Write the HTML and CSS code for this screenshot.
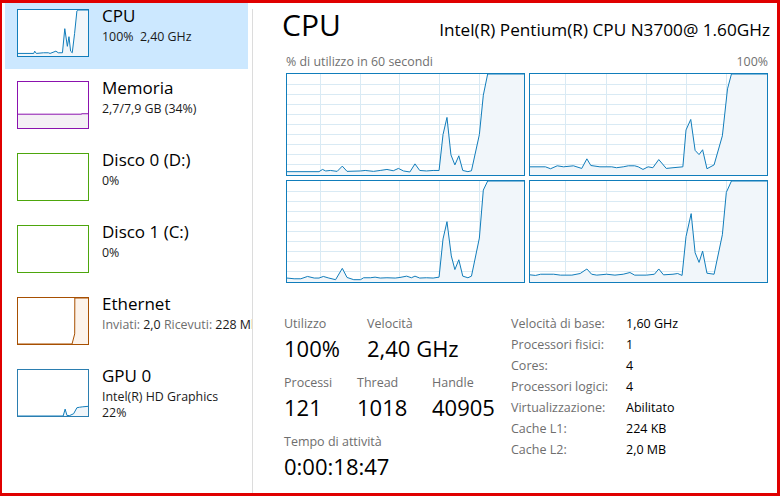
FILE: index.html
```html
<!DOCTYPE html>
<html lang="it">
<head>
<meta charset="utf-8">
<title>Gestione attività - Prestazioni</title>
<link rel="stylesheet" href="styles.css">
</head>
<body>
<div class="frame">
  <aside class="sidebar">
    <div class="item selected">
      <div class="thumb cpu">
        <svg viewBox="0 0 60 100" preserveAspectRatio="none">
          <polygon class="fill" points="0,94.4 13.5,94.4 14.3,89.5 15.7,94.4 21.9,93 26,93 27.5,94.4 32.5,89.5 34.5,93 38.1,93 40.1,40.6 42.3,79 43.7,58 45.1,89.5 46.5,93 48.5,51 50.5,2 51.3,0 60,0 60,100 0,100"/>
          <polyline class="line" points="0,94.4 13.5,94.4 14.3,89.5 15.7,94.4 21.9,93 26,93 27.5,94.4 32.5,89.5 34.5,93 38.1,93 40.1,40.6 42.3,79 43.7,58 45.1,89.5 46.5,93 48.5,51 50.5,2 51.3,0 60,0"/>
        </svg>
      </div>
      <div class="info">
        <div class="name">CPU</div>
        <div class="sub">100%&nbsp; 2,40 GHz</div>
      </div>
    </div>
    <div class="item">
      <div class="thumb mem">
        <svg viewBox="0 0 60 100" preserveAspectRatio="none">
          <polygon class="fill" points="0,70 54.5,70 54.5,69 60,69 60,100 0,100"/>
          <polyline class="line" points="0,70 54.5,70 54.5,69 60,69"/>
        </svg>
      </div>
      <div class="info">
        <div class="name">Memoria</div>
        <div class="sub">2,7/7,9 GB (34%)</div>
      </div>
    </div>
    <div class="item">
      <div class="thumb disk"></div>
      <div class="info">
        <div class="name">Disco 0 (D:)</div>
        <div class="sub">0%</div>
      </div>
    </div>
    <div class="item">
      <div class="thumb disk"></div>
      <div class="info">
        <div class="name">Disco 1 (C:)</div>
        <div class="sub">0%</div>
      </div>
    </div>
    <div class="item">
      <div class="thumb eth">
        <svg viewBox="0 0 60 100" preserveAspectRatio="none">
          <polygon class="fill" points="0,100 46.3,100 48.6,78 48.7,0 60,0 60,100"/>
          <polyline class="line" points="0,100 46.3,100 48.6,78 48.7,0 60,0"/>
        </svg>
      </div>
      <div class="info">
        <div class="name">Ethernet</div>
        <div class="sub"><span class="muted">Inviati:</span> 2,0 <span class="muted">Ricevuti:</span> 228 Mbps</div>
      </div>
    </div>
    <div class="item">
      <div class="thumb gpu">
        <svg viewBox="0 0 60 100" preserveAspectRatio="none">
          <polygon class="fill" points="0,100 38.7,100 40.4,85 42,99 44.3,99 47.7,95 50.5,82 52.7,81 55.5,80 60,79 60,100"/>
          <polyline class="line" points="0,100 38.7,100 40.4,85 42,99 44.3,99 47.7,95 50.5,82 52.7,81 55.5,80 60,79"/>
        </svg>
      </div>
      <div class="info">
        <div class="name">GPU 0</div>
        <div class="sub">Intel(R) HD Graphics</div>
        <div class="sub tight">22%</div>
      </div>
    </div>
  </aside>

  <main class="detail">
    <header class="head">
      <h1 class="title">CPU</h1>
      <div class="model">Intel(R) Pentium(R) CPU N3700@ 1.60GHz</div>
    </header>
    <div class="axis"><span>% di utilizzo in 60 secondi</span><span>100%</span></div>

    <div class="graphs">
      <div class="graph">
        <svg viewBox="0 0 60 100" preserveAspectRatio="none">
          <g class="grid">
            <line x1="0" y1="10" x2="60" y2="10"/><line x1="0" y1="20" x2="60" y2="20"/><line x1="0" y1="30" x2="60" y2="30"/><line x1="0" y1="40" x2="60" y2="40"/><line x1="0" y1="50" x2="60" y2="50"/><line x1="0" y1="60" x2="60" y2="60"/><line x1="0" y1="70" x2="60" y2="70"/><line x1="0" y1="80" x2="60" y2="80"/><line x1="0" y1="90" x2="60" y2="90"/>
            <line x1="8.5" y1="0" x2="8.5" y2="100"/><line x1="18.5" y1="0" x2="18.5" y2="100"/><line x1="28.5" y1="0" x2="28.5" y2="100"/><line x1="38.7" y1="0" x2="38.7" y2="100"/><line x1="48.7" y1="0" x2="48.7" y2="100"/><line x1="58.8" y1="0" x2="58.8" y2="100"/>
          </g>
          <polygon class="fill" points="0,96.7 8.1,96.7 9,94.5 9.8,96 11,95.5 12.7,96.4 14,91.2 15.2,96.4 18.6,96 19.8,95.5 21.9,96.4 23.6,95.5 25.3,94.5 26.9,95.8 28.2,93.5 29.5,96 31.1,97 32.4,89 33.6,95.5 35.3,96 37,95.5 38.5,95.5 39.5,60 40.5,43 41.5,80 42.5,90 43.5,81 44.5,95.5 45.8,96.7 46.7,95.8 48.7,60 49.7,21 50.8,0 60,0 60,100 0,100"/>
          <polyline class="line" points="0,96.7 8.1,96.7 9,94.5 9.8,96 11,95.5 12.7,96.4 14,91.2 15.2,96.4 18.6,96 19.8,95.5 21.9,96.4 23.6,95.5 25.3,94.5 26.9,95.8 28.2,93.5 29.5,96 31.1,97 32.4,89 33.6,95.5 35.3,96 37,95.5 38.5,95.5 39.5,60 40.5,43 41.5,80 42.5,90 43.5,81 44.5,95.5 45.8,96.7 46.7,95.8 48.7,60 49.7,21 50.8,0 60,0"/>
        </svg>
      </div>
      <div class="graph">
        <svg viewBox="0 0 60 100" preserveAspectRatio="none">
          <g class="grid">
            <line x1="0" y1="10" x2="60" y2="10"/><line x1="0" y1="20" x2="60" y2="20"/><line x1="0" y1="30" x2="60" y2="30"/><line x1="0" y1="40" x2="60" y2="40"/><line x1="0" y1="50" x2="60" y2="50"/><line x1="0" y1="60" x2="60" y2="60"/><line x1="0" y1="70" x2="60" y2="70"/><line x1="0" y1="80" x2="60" y2="80"/><line x1="0" y1="90" x2="60" y2="90"/>
            <line x1="9.1" y1="0" x2="9.1" y2="100"/><line x1="19.4" y1="0" x2="19.4" y2="100"/><line x1="29.5" y1="0" x2="29.5" y2="100"/><line x1="39.7" y1="0" x2="39.7" y2="100"/><line x1="49.7" y1="0" x2="49.7" y2="100"/><line x1="59.6" y1="0" x2="59.6" y2="100"/>
          </g>
          <polygon class="fill" points="0,91.9 3.9,91.9 5.2,93.8 6.9,90.9 8.5,91.9 11,90.9 13.1,93.5 14.4,84 15.4,90.6 17.7,91.9 20.7,91.9 21.9,92.8 23.6,91.9 24.9,90.9 26.5,90.9 27.4,91.9 28.6,94.5 29.9,91.9 31.1,92.8 32.6,84.7 34.5,93.5 36.2,92.8 38.7,91.9 39.5,55.4 40.7,45 41.8,75.6 42.8,79.8 43.7,75 44.8,93.8 46.6,90 48.7,61.2 50,14.7 51,0 60,0 60,100 0,100"/>
          <polyline class="line" points="0,91.9 3.9,91.9 5.2,93.8 6.9,90.9 8.5,91.9 11,90.9 13.1,93.5 14.4,84 15.4,90.6 17.7,91.9 20.7,91.9 21.9,92.8 23.6,91.9 24.9,90.9 26.5,90.9 27.4,91.9 28.6,94.5 29.9,91.9 31.1,92.8 32.6,84.7 34.5,93.5 36.2,92.8 38.7,91.9 39.5,55.4 40.7,45 41.8,75.6 42.8,79.8 43.7,75 44.8,93.8 46.6,90 48.7,61.2 50,14.7 51,0 60,0"/>
        </svg>
      </div>
      <div class="graph">
        <svg viewBox="0 0 60 100" preserveAspectRatio="none">
          <g class="grid">
            <line x1="0" y1="10" x2="60" y2="10"/><line x1="0" y1="20" x2="60" y2="20"/><line x1="0" y1="30" x2="60" y2="30"/><line x1="0" y1="40" x2="60" y2="40"/><line x1="0" y1="50" x2="60" y2="50"/><line x1="0" y1="60" x2="60" y2="60"/><line x1="0" y1="70" x2="60" y2="70"/><line x1="0" y1="80" x2="60" y2="80"/><line x1="0" y1="90" x2="60" y2="90"/>
            <line x1="8.5" y1="0" x2="8.5" y2="100"/><line x1="18.5" y1="0" x2="18.5" y2="100"/><line x1="28.5" y1="0" x2="28.5" y2="100"/><line x1="38.7" y1="0" x2="38.7" y2="100"/><line x1="48.7" y1="0" x2="48.7" y2="100"/><line x1="58.8" y1="0" x2="58.8" y2="100"/>
          </g>
          <polygon class="fill" points="0,96.1 1.8,96.8 3.5,96.8 5.2,94.5 6.9,96.1 8.1,96.1 9.2,94.5 10.6,96.1 12.3,97.7 14,86.5 15.2,95.5 16.9,97.7 18.6,97.7 19.4,95.8 21.1,95.8 22.3,95.2 23.6,96.1 25.3,95.8 27.4,96.1 28.6,95.5 30.3,94.2 31.5,95.8 32.4,94.2 33.6,96.1 35.3,95.8 37,96.1 38.5,95.2 39.5,57.4 40.5,40.3 41.6,74.2 42.5,87.7 43.5,78 44.5,94.2 45.8,95.8 46.7,94.2 48.7,56.5 49.7,9 50.8,0 60,0 60,100 0,100"/>
          <polyline class="line" points="0,96.1 1.8,96.8 3.5,96.8 5.2,94.5 6.9,96.1 8.1,96.1 9.2,94.5 10.6,96.1 12.3,97.7 14,86.5 15.2,95.5 16.9,97.7 18.6,97.7 19.4,95.8 21.1,95.8 22.3,95.2 23.6,96.1 25.3,95.8 27.4,96.1 28.6,95.5 30.3,94.2 31.5,95.8 32.4,94.2 33.6,96.1 35.3,95.8 37,96.1 38.5,95.2 39.5,57.4 40.5,40.3 41.6,74.2 42.5,87.7 43.5,78 44.5,94.2 45.8,95.8 46.7,94.2 48.7,56.5 49.7,9 50.8,0 60,0"/>
        </svg>
      </div>
      <div class="graph">
        <svg viewBox="0 0 60 100" preserveAspectRatio="none">
          <g class="grid">
            <line x1="0" y1="10" x2="60" y2="10"/><line x1="0" y1="20" x2="60" y2="20"/><line x1="0" y1="30" x2="60" y2="30"/><line x1="0" y1="40" x2="60" y2="40"/><line x1="0" y1="50" x2="60" y2="50"/><line x1="0" y1="60" x2="60" y2="60"/><line x1="0" y1="70" x2="60" y2="70"/><line x1="0" y1="80" x2="60" y2="80"/><line x1="0" y1="90" x2="60" y2="90"/>
            <line x1="9.1" y1="0" x2="9.1" y2="100"/><line x1="19.4" y1="0" x2="19.4" y2="100"/><line x1="29.5" y1="0" x2="29.5" y2="100"/><line x1="39.7" y1="0" x2="39.7" y2="100"/><line x1="49.7" y1="0" x2="49.7" y2="100"/><line x1="59.6" y1="0" x2="59.6" y2="100"/>
          </g>
          <polygon class="fill" points="0,92.9 1.4,93.5 2.7,92.3 6,92.3 7.7,93.2 10.6,93.2 12.7,91.6 14.4,87.1 15.6,92.3 16.9,93.2 19.4,92.3 21.5,93.2 23.6,92.3 25.3,90.6 26.5,93.2 29.5,93.2 31.5,92.3 32.6,87.1 33.8,92.9 36.2,92.3 37.4,91.6 38.5,93.5 39.5,55 40.8,32.3 41.8,71 42.8,80.6 43.7,69.4 44.8,91.3 46.6,92.3 48.7,53.2 49.7,11.3 51,0 60,0 60,100 0,100"/>
          <polyline class="line" points="0,92.9 1.4,93.5 2.7,92.3 6,92.3 7.7,93.2 10.6,93.2 12.7,91.6 14.4,87.1 15.6,92.3 16.9,93.2 19.4,92.3 21.5,93.2 23.6,92.3 25.3,90.6 26.5,93.2 29.5,93.2 31.5,92.3 32.6,87.1 33.8,92.9 36.2,92.3 37.4,91.6 38.5,93.5 39.5,55 40.8,32.3 41.8,71 42.8,80.6 43.7,69.4 44.8,91.3 46.6,92.3 48.7,53.2 49.7,11.3 51,0 60,0"/>
        </svg>
      </div>
    </div>

    <section class="stats">
      <div class="live">
        <div class="row">
          <div class="stat w83"><div class="label">Utilizzo</div><div class="value">100%</div></div>
          <div class="stat"><div class="label">Velocità</div><div class="value">2,40 GHz</div></div>
        </div>
        <div class="row">
          <div class="stat w73"><div class="label">Processi</div><div class="value">121</div></div>
          <div class="stat w75"><div class="label">Thread</div><div class="value">1018</div></div>
          <div class="stat"><div class="label">Handle</div><div class="value">40905</div></div>
        </div>
        <div class="row">
          <div class="stat"><div class="label">Tempo di attività</div><div class="value">0:00:18:47</div></div>
        </div>
      </div>
      <dl class="specs">
        <dt>Velocità di base:</dt><dd>1,60 GHz</dd>
        <dt>Processori fisici:</dt><dd>1</dd>
        <dt>Cores:</dt><dd>4</dd>
        <dt>Processori logici:</dt><dd>4</dd>
        <dt>Virtualizzazione:</dt><dd>Abilitato</dd>
        <dt>Cache L1:</dt><dd>224 KB</dd>
        <dt>Cache L2:</dt><dd>2,0 MB</dd>
      </dl>
    </section>
  </main>
</div>
</body>
</html>
```

FILE: styles.css
```css
html, body {
  margin: 0;
  padding: 0;
  background: #ffffff;
}

body {
  font-family: "Open Sans", "Noto Sans", "DejaVu Sans", sans-serif;
  color: #000000;
}

.frame {
  width: 780px;
  height: 496px;
  box-sizing: border-box;
  border: 3px solid #e00000;
  border-left-width: 2px;
  display: flex;
  background: #ffffff;
  overflow: hidden;
}

/* ---------- sidebar ---------- */
.sidebar {
  width: 250px;
  flex: none;
  padding-left: 3px;
  box-sizing: border-box;
  overflow: hidden;
}

.item {
  width: 243px;
  height: 66px;
  margin-bottom: 6px;
  box-sizing: border-box;
  padding-left: 12px;
  display: flex;
  align-items: flex-start;
}

.item.selected {
  background: #cce8ff;
}

.thumb {
  width: 72px;
  height: 48px;
  margin-top: 6px;
  box-sizing: border-box;
  border: 1px solid #117dbb;
  flex: none;
  background: #ffffff;
}

.thumb svg,
.graph svg {
  display: block;
  width: 100%;
  height: 100%;
}

.line {
  fill: none;
  stroke-width: 1;
  vector-effect: non-scaling-stroke;
  stroke-linejoin: round;
}

.cpu .line, .gpu .line { stroke: #117dbb; }
.cpu .fill, .gpu .fill { fill: #f1f6fa; }

.thumb.mem { border-color: #8b12ae; }
.mem .line { stroke: #8b12ae; }
.mem .fill { fill: #f4f0f5; }

.thumb.disk { border-color: #4da60c; }

.thumb.eth { border-color: #a74f01; }
.eth .line { stroke: #a74f01; }
.eth .fill { fill: #fcf3eb; }

.thumb.gpu { border-color: #2b7eb0; }

.info {
  margin-left: 13px;
  padding-top: 2px;
  white-space: nowrap;
}

.name {
  font-size: 17px;
  line-height: 22px;
  color: #000000;
}

.sub {
  font-size: 12.4px;
  line-height: 16px;
  margin-top: 2px;
  color: #1a1a1a;
}

.sub.tight {
  margin-top: 0;
}

.muted {
  color: #6e6e6e;
}

/* ---------- detail ---------- */
.detail {
  flex: 1;
  margin-top: 6px;
  border-left: 1px solid #dcdcdc;
  padding-left: 33px;
  padding-right: 9px;
  min-width: 0;
}

.head {
  display: flex;
  justify-content: space-between;
  align-items: baseline;
  margin-left: -4px;
  margin-right: -2px;
}

.title {
  margin: 0;
  font-weight: normal;
  font-size: 30px;
  line-height: 32px;
}

.model {
  font-size: 17.2px;
}

.axis {
  display: flex;
  justify-content: space-between;
  margin-top: 13px;
  margin-bottom: 3px;
  font-size: 12.4px;
  line-height: 16px;
  color: #707070;
}

.graphs {
  display: grid;
  grid-template-columns: 239px 239px;
  grid-template-rows: 103px 103px;
  gap: 4px;
}

.graph {
  box-sizing: border-box;
  border: 1px solid #117dbb;
  background: #ffffff;
}

.grid line {
  stroke: #d9eaf4;
  stroke-width: 1;
  vector-effect: non-scaling-stroke;
  shape-rendering: crispEdges;
}

.graph .line { stroke: #117dbb; }
.graph .fill { fill: #f1f6fa; }

/* ---------- stats ---------- */
.stats {
  display: flex;
  align-items: flex-start;
  margin-top: 30px;
  margin-left: -2px;
}

.live {
  width: 227px;
  flex: none;
  padding-top: 2.5px;
}

.row {
  display: flex;
  margin-bottom: 10px;
}

.stat.w83 { width: 83px; }
.stat.w73 { width: 73px; }
.stat.w75 { width: 75px; }

.label {
  font-size: 12.5px;
  line-height: 16px;
  color: #6e6e6e;
}

.value {
  font-size: 22px;
  line-height: 33px;
  color: #000000;
}

.specs {
  margin: 0;
  display: grid;
  grid-template-columns: 115px auto;
  align-content: start;
  font-size: 12.5px;
  line-height: 21px;
}

.specs dt {
  color: #6e6e6e;
}

.specs dd {
  margin: 0;
  color: #000000;
}
```
